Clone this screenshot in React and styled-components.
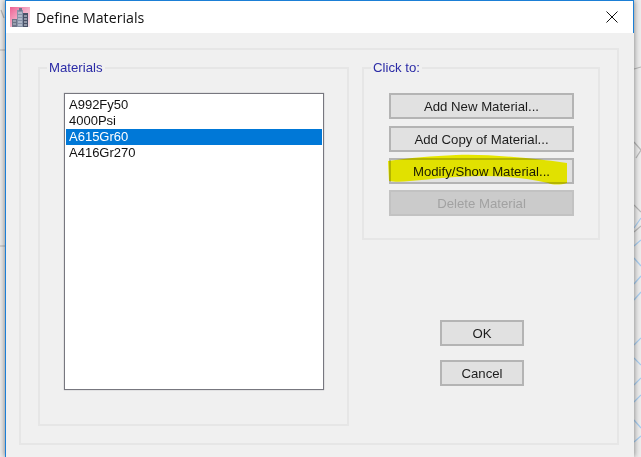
import React from 'react'
import styled, { createGlobalStyle } from 'styled-components'

const GlobalStyle = createGlobalStyle`
  html, body { margin: 0; padding: 0; background: #ededed; }
  body { font-family: "Liberation Sans", Arial, sans-serif; }
`

const Desktop = styled.div`
  position: relative;
  width: 641px;
  height: 457px;
  overflow: hidden;
  padding-left: 5px;
  box-sizing: border-box;
  background: #ededed;
`

const Backdrop = styled.svg`
  position: absolute;
  left: 0;
  top: 0;
`

const Window = styled.div`
  position: relative;
  width: 629px;
  height: 457px;
  box-sizing: border-box;
  display: flex;
  flex-direction: column;
  background: #f0f0f0;
  border-left: 1px solid #1b7fd6;
  box-shadow: 0 0 6px rgba(0, 0, 0, 0.5);
`

const TitleBar = styled.div`
  height: 33px;
  flex: none;
  box-sizing: border-box;
  display: flex;
  align-items: center;
  padding: 0 15px 0 4px;
  background: #fff;
  border-top: 1px solid #1b7fd6;
  border-right: 1px solid #1b7fd6;
`

const Title = styled.span`
  margin-left: 6px;
  flex: 1;
  font-family: "Open Sans", sans-serif;
  font-size: 14.2px;
  color: #111;
  filter: blur(0.25px);
`

const Frame = styled.div`
  flex: 1;
  margin: 15px 15px 14px 13px;
  box-sizing: border-box;
  display: flex;
  gap: 13px;
  padding: 17px;
  border: 2px solid #e6e6e6;
`

const Column = styled.div`
  display: flex;
  flex-direction: column;
  width: ${(p) => p.$width}px;
`

const Group = styled.div`
  position: relative;
  box-sizing: border-box;
  height: ${(p) => p.$height}px;
  border: 2px solid #e6e6e6;
  padding: ${(p) => p.$padding};
`

const Legend = styled.span`
  position: absolute;
  left: 7px;
  top: -9px;
  padding: 0 2px;
  background: #f0f0f0;
  font-size: 13.2px;
  line-height: 16px;
  color: #2b2ba6;
  filter: blur(0.3px);
`

const MaterialList = styled.ul`
  list-style: none;
  margin: 0;
  padding: 3px 1px;
  width: 260px;
  height: 297px;
  box-sizing: border-box;
  background: #fff;
  border: 1px solid #77777f;
  box-shadow: 0 0 1px #9a9aa2;
`

const MaterialRow = styled.li`
  height: 16px;
  line-height: 16px;
  padding-left: 3px;
  font-size: 13px;
  color: ${(p) => (p.$selected ? '#fff' : '#111')};
  background: ${(p) => (p.$selected ? '#0078d7' : 'transparent')};
  & > span { filter: blur(0.3px); display: inline-block; }
`

const ButtonStack = styled.div`
  display: flex;
  flex-direction: column;
  gap: ${(p) => p.$gap}px;
  align-items: ${(p) => p.$align || 'stretch'};
`

const ButtonSlot = styled.div`
  position: relative;
`

const Button = styled.button`
  display: block;
  width: ${(p) => p.$width || 185}px;
  height: 26px;
  margin-bottom: ${(p) => p.$extraGap || 0}px;
  padding: 0;
  box-sizing: border-box;
  font-family: "Liberation Sans", Arial, sans-serif;
  font-size: 13.2px;
  color: #1c1c1c;
  background: #e1e1e1;
  border: 2px solid #b4b4b4;
  & > span { filter: blur(0.3px); display: inline-block; }
  &:disabled {
    color: #a2a2a2;
    background: #cbcbcb;
    border-color: #c2c2c2;
  }
`

const Marker = styled.svg`
  position: absolute;
  left: -1px;
  top: -3px;
  overflow: visible;
  mix-blend-mode: darken;
  pointer-events: none;
`

const DialogButtons = styled(ButtonStack)`
  margin-top: 80px;
  padding-left: 78px;
`

const AppIcon = () => (
  <svg width="20" height="20" viewBox="0 0 20 20">
    <defs>
      <linearGradient id="sky" x1="0" y1="0" x2="1" y2="1">
        <stop offset="0" stopColor="#ee5f92" />
        <stop offset="0.55" stopColor="#f5b6cd" />
        <stop offset="1" stopColor="#f3e8ee" />
      </linearGradient>
    </defs>
    <rect width="20" height="20" fill="url(#sky)" />
    <rect x="2" y="12" width="5" height="8" fill="#6d7488" />
    <rect x="7" y="3" width="6" height="17" fill="#8792a8" />
    <rect x="9" y="1" width="3" height="3" fill="#6c7890" />
    <rect x="13" y="6" width="5" height="14" fill="#4a5268" />
    <path d="M8 6h4M8 9h4M8 12h4M8 15h4M8 18h4M14 9h3M14 12h3M14 15h3M14 18h3" stroke="#d8dde8" strokeWidth="1" />
    <path d="M3 14h3M3 17h3" stroke="#c2c8d4" strokeWidth="1" />
  </svg>
)

const CloseIcon = () => (
  <svg width="12" height="12" viewBox="0 0 12 12">
    <path d="M0.5 0.5L11.5 11.5M11.5 0.5L0.5 11.5" stroke="#111" strokeWidth="1" fill="none" />
  </svg>
)

const materials = ['A992Fy50', '4000Psi', 'A615Gr60', 'A416Gr270']

const App = () => (
  <Desktop>
    <GlobalStyle />
    <Backdrop width="641" height="457" viewBox="0 0 641 457">
      <g fill="none" stroke="#b8b8b8" strokeWidth="1.2">
        <path d="M0 50H5M0 246H5M1 10L4 18" />
        <path d="M634 69L641 67M634 142L641 150L636 158M634 205L641 212M634 232L641 226" />
      </g>
      <g fill="none" stroke="#a8cdf0" strokeWidth="1.2">
        <path d="M634 228L641 218M634 246L641 240M634 258L641 266M634 284L641 276M634 300L641 292M634 345L641 338M634 358L641 365M634 385L641 378M634 402L641 395M634 420L641 428M634 442L641 436" />
      </g>
    </Backdrop>
    <Window>
      <TitleBar>
        <AppIcon />
        <Title>Define Materials</Title>
        <CloseIcon />
      </TitleBar>
      <Frame>
        <Column $width={311}>
          <Group $height={359} $padding="24px">
            <Legend>Materials</Legend>
            <MaterialList>
              {materials.map((name) => (
                <MaterialRow key={name} $selected={name === 'A615Gr60'}>
                  <span>{name}</span>
                </MaterialRow>
              ))}
            </MaterialList>
          </Group>
        </Column>
        <Column $width={238}>
          <Group $height={173} $padding="24px 25px">
            <Legend>Click to:</Legend>
            <ButtonStack $gap={6}>
              <Button $extraGap={1}><span>Add New Material...</span></Button>
              <Button><span>Add Copy of Material...</span></Button>
              <ButtonSlot>
                <Button><span>Modify/Show Material...</span></Button>
                <Marker width="180" height="30" viewBox="0 0 180 30">
                  <path
                    d="M0 6C20 3 45 1 68 0C90 -1 112 1 138 3C150 4 165 6 179 8L179 28C172 30 165 30 160 28C140 23 118 21 94 21C70 21 45 24 22 26C14 27 6 27 1 26Z"
                    fill="#e6e600"
                  />
                </Marker>
              </ButtonSlot>
              <Button disabled><span>Delete Material</span></Button>
            </ButtonStack>
          </Group>
          <DialogButtons $gap={14}>
            <Button $width={84}><span>OK</span></Button>
            <Button $width={84}><span>Cancel</span></Button>
          </DialogButtons>
        </Column>
      </Frame>
    </Window>
  </Desktop>
)

export default App
